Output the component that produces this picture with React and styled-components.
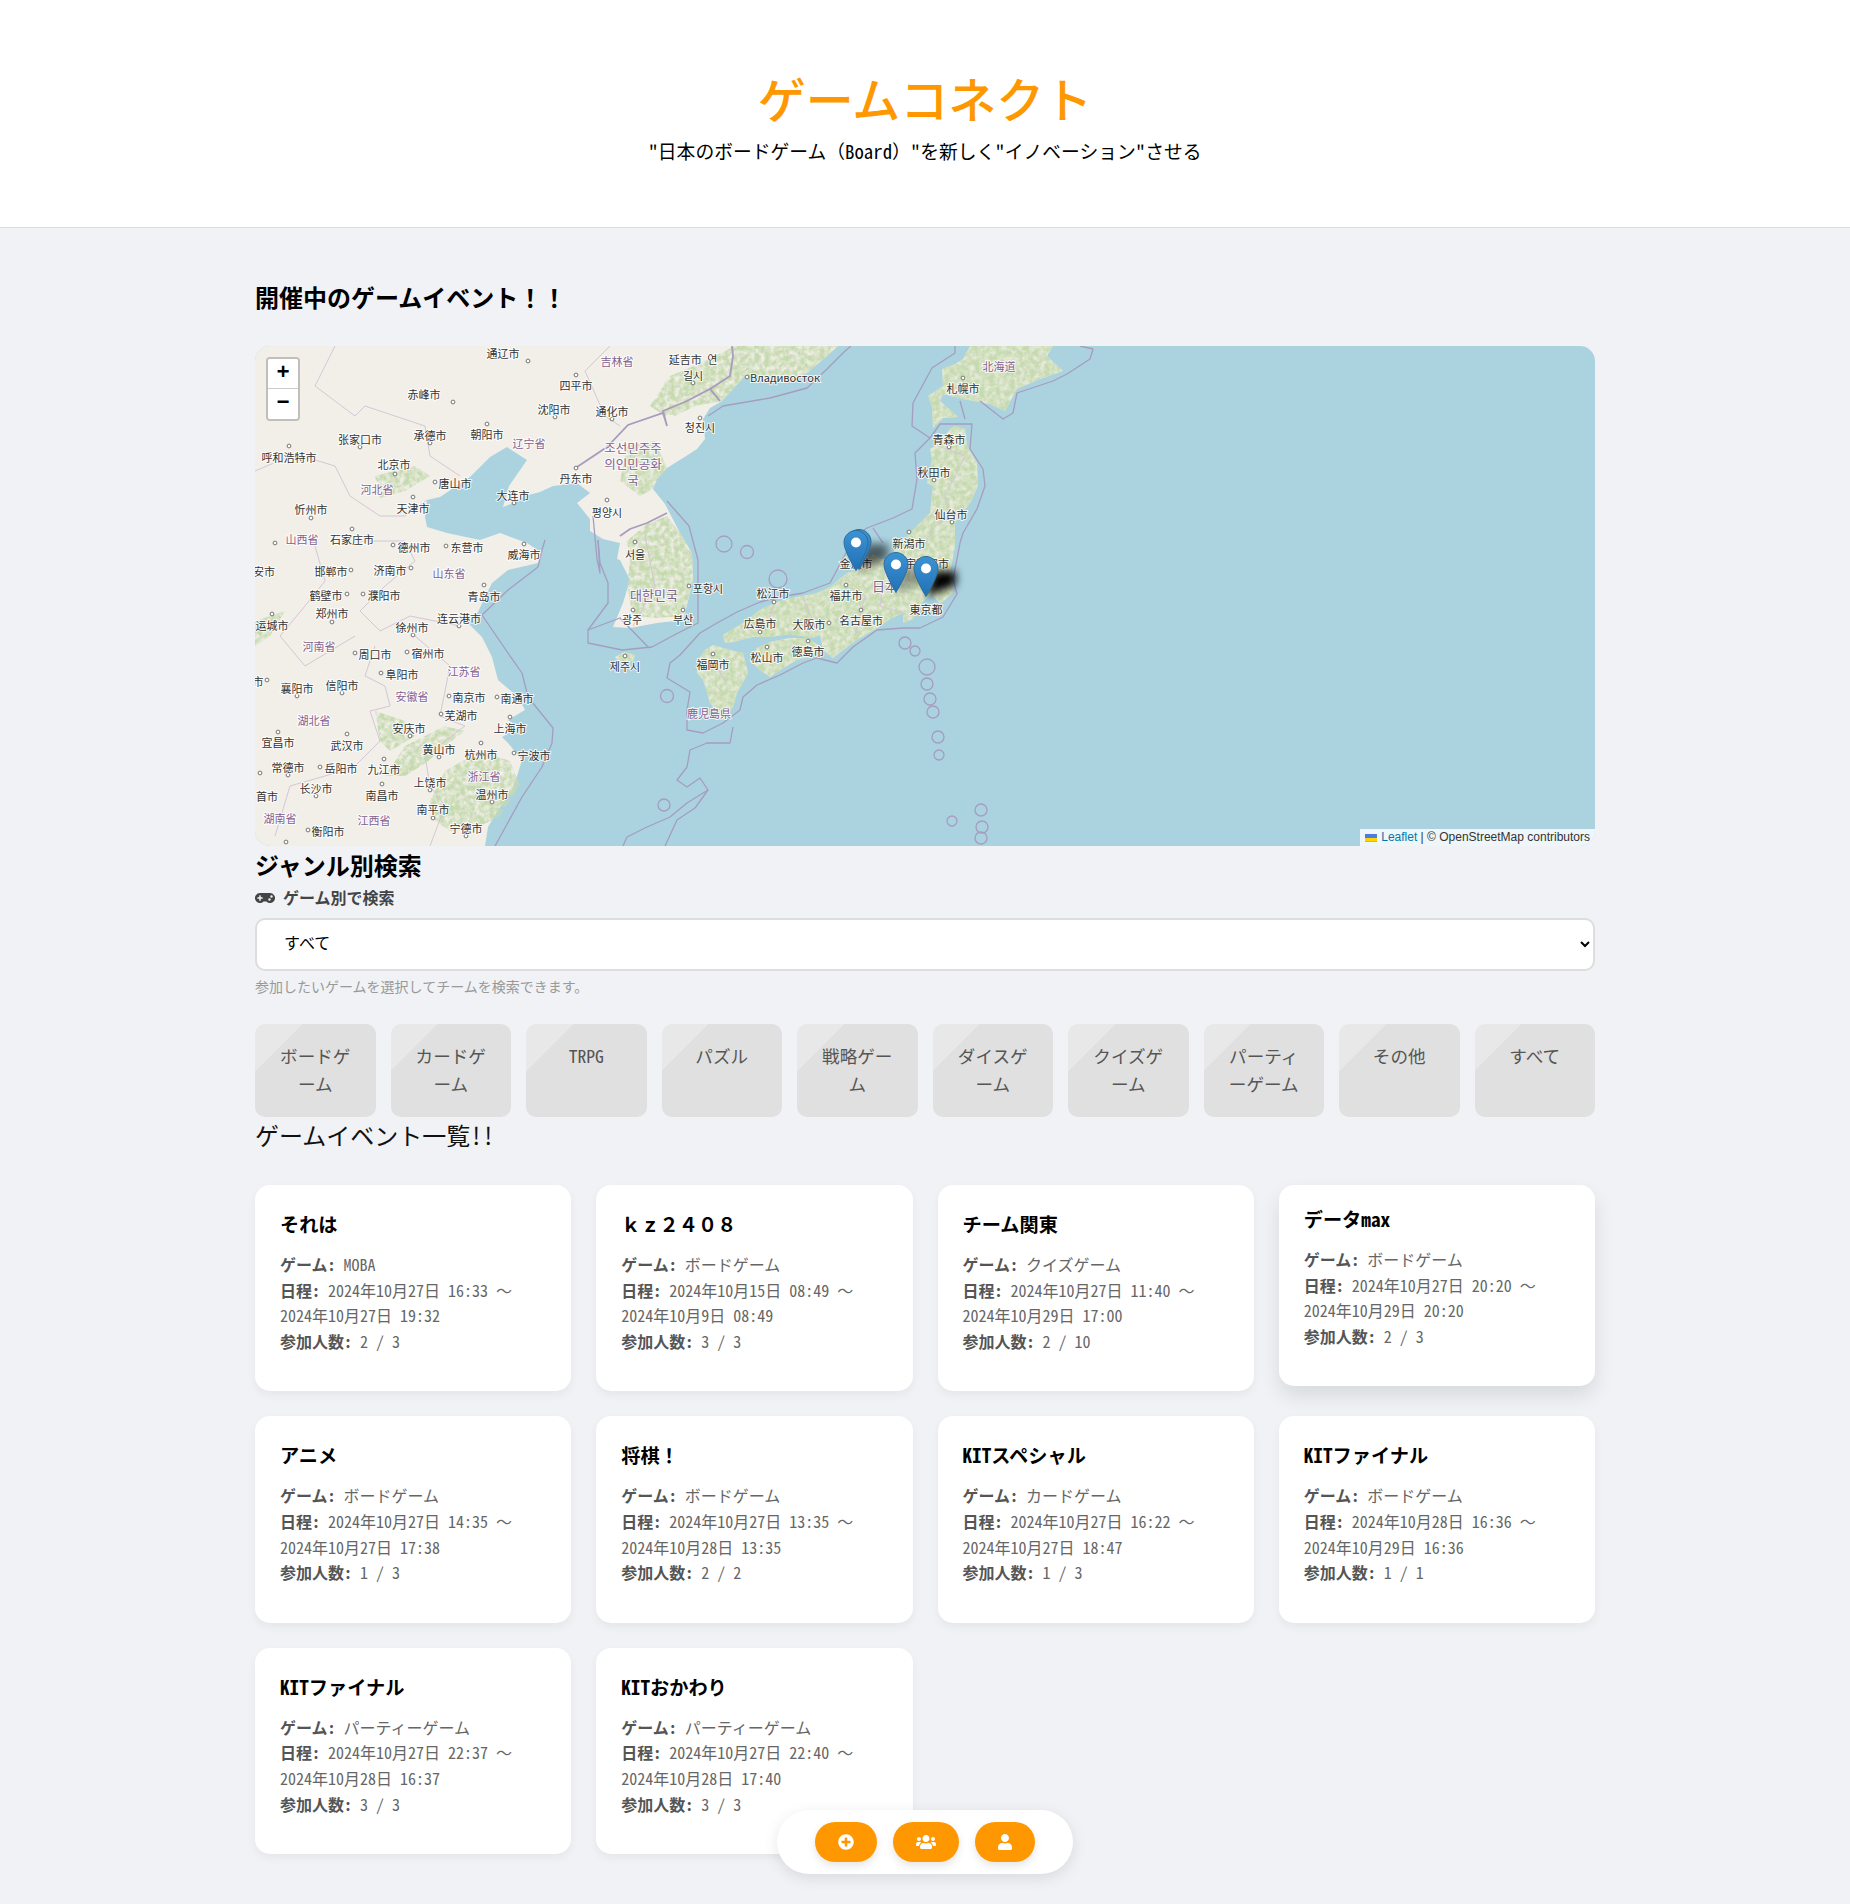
import React from "react";
import styled, { createGlobalStyle } from "styled-components";
import { FaGamepad, FaPlusCircle, FaUsers, FaUser } from "react-icons/fa";

const GlobalStyle = createGlobalStyle`
  * { box-sizing: border-box; }
  html, body { margin: 0; padding: 0; }
  body {
    background: #f0f2f5;
    color: #333;
    font-family: "Noto Sans CJK JP", "Noto Sans", sans-serif;
    font-feature-settings: "hwid";
    line-height: 1.6;
  }
`;

// hwid squeezes full-width punctuation too, this keeps it as typed
const FullWidth = styled.span`
  font-feature-settings: normal;
`;

const Header = styled.header`
  background: #fff;
  border-bottom: 1px solid #ddd;
  height: 228px;
  padding-top: 58px;
  text-align: center;
`;

const Title = styled.h1`
  margin: 0;
  color: #ff9800;
  font-size: 48px;
  font-weight: 500;
  line-height: 78px;
`;

const Subtitle = styled.p`
  margin: 0;
  color: #000;
  font-size: 18.8px;
  line-height: 30px;
`;

const Main = styled.main`
  width: 1340px;
  margin: 0 auto;
  padding: 50px 0 50px;
`;

const SectionTitle = styled.h2`
  margin: 0 0 ${(p) => p.$gap || 0}px;
  color: #000;
  font-size: 24px;
  font-weight: 700;
  line-height: 38.4px;
`;

const MapFrame = styled.div`
  position: relative;
  height: 500px;
  border-radius: 15px;
  overflow: hidden;
  background: #aad3df;
`;

const MapCanvas = styled.svg`
  display: block;
  font-family: "Noto Sans CJK SC", "Noto Sans CJK JP", sans-serif;
`;

const PlaceName = styled.text`
  fill: ${(p) => (p.$region ? "#82608f" : "#333")};
  font-size: ${(p) => p.$size || 11}px;
  text-anchor: middle;
  dominant-baseline: central;
  paint-order: stroke;
  stroke: rgba(255, 255, 255, 0.8);
  stroke-width: 2px;
`;

const Coast = styled.polygon`
  fill: ${(p) => p.$fill || "#f2efe9"};
  stroke: none;
`;

const SeaLine = styled.polyline`
  fill: none;
  stroke: #a59dbf;
  stroke-width: 1.3;
  stroke-linejoin: round;
`;

const AdminLine = styled.polyline`
  fill: none;
  stroke: ${(p) => (p.$strong ? "#a99bbd" : "#d3c6d6")};
  stroke-width: ${(p) => (p.$strong ? 1.8 : 1)};
`;

const SeaRing = styled.circle`
  fill: none;
  stroke: #a59dbf;
  stroke-width: 1.3;
`;

const CityDot = styled.circle`
  fill: #fff;
  stroke: #666;
  stroke-width: 0.9;
`;

const ZoomControl = styled.div`
  position: absolute;
  top: 11px;
  left: 11px;
  width: 34px;
  border: 2px solid rgba(0, 0, 0, 0.2);
  border-radius: 4px;
  background-clip: padding-box;
`;

const ZoomButton = styled.a`
  display: block;
  height: 30px;
  background: #fff;
  border-bottom: ${(p) => (p.$last ? "none" : "1px solid #ccc")};
  border-radius: ${(p) => (p.$last ? "0 0 2px 2px" : "2px 2px 0 0")};
  color: #000;
  font: bold 22px/30px "Liberation Mono", monospace;
  text-align: center;
`;

const Attribution = styled.div`
  position: absolute;
  right: 0;
  bottom: 0;
  display: flex;
  align-items: center;
  gap: 4px;
  padding: 0 5px;
  height: 17px;
  background: rgba(255, 255, 255, 0.8);
  color: #333;
  font: 12px/17px "Liberation Sans", Arial, sans-serif;
  white-space: pre;
`;

const AttributionLink = styled.a`
  color: #0078a8;
`;

const GenreSectionIcon = styled(FaGamepad)`
  width: 20px;
  height: 16px;
`;

const FilterLabel = styled.label`
  display: flex;
  align-items: center;
  gap: 8px;
  color: #444;
  font-size: 16px;
  font-weight: 700;
  line-height: 25.6px;
`;

const GameSelect = styled.select`
  display: block;
  width: 100%;
  height: 53px;
  margin-top: 8px;
  padding: 0 23px 5px;
  background: #fff;
  border: 2px solid #ddd;
  border-radius: 10px;
  color: #000;
  font-family: inherit;
  font-size: 16px;
`;

const Hint = styled.p`
  margin: 4px 0 26px;
  color: #999;
  font-size: 14px;
  line-height: 22.4px;
`;

const GenreGrid = styled.div`
  display: grid;
  grid-template-columns: repeat(10, 1fr);
  gap: 15px;
`;

const GenreButton = styled.button`
  display: flex;
  justify-content: center;
  align-items: flex-start;
  height: 93px;
  padding: 18px 20px;
  border: none;
  border-radius: 10px;
  background: linear-gradient(135deg, #e8e8e8 22%, #e0e0e0 22%);
  color: #555;
  font-family: inherit;
  font-feature-settings: inherit;
  font-size: 17.6px;
  line-height: 28.5px;
  text-align: center;
`;

const ListTitle = styled.h2`
  margin: 0 0 32px;
  color: #111;
  font-size: 24px;
  font-weight: 400;
  line-height: 36px;
`;

const CardGrid = styled.div`
  display: grid;
  grid-template-columns: repeat(4, 1fr);
  gap: 25px;
`;

const Card = styled.article`
  height: ${(p) => (p.$raised ? 201 : 206.4)}px;
  padding: ${(p) => (p.$raised ? 20 : 25)}px 25px 25px;
  background: #fff;
  border-radius: 15px;
  box-shadow: ${(p) =>
    p.$raised ? "0 10px 20px rgba(0, 0, 0, 0.1)" : "0 4px 10px rgba(0, 0, 0, 0.05)"};
`;

const CardTitle = styled.h3`
  margin: 0 0 12.5px;
  color: #000;
  font-size: 19.2px;
  font-weight: 700;
  line-height: 29.7px;
`;

const CardLine = styled.p`
  margin: 0;
  color: #666;
  font-size: 16px;
  line-height: 25.6px;
`;

const CardLabel = styled.strong`
  color: #555;
  font-weight: 700;
`;

const BottomNav = styled.nav`
  position: fixed;
  left: 50%;
  bottom: 30px;
  transform: translateX(-50%);
  display: flex;
  gap: 16px;
  padding: 12px 38px;
  background: #fff;
  border-radius: 32px;
  box-shadow: 0 4px 15px rgba(0, 0, 0, 0.1);
`;

const NavButton = styled.button`
  display: flex;
  align-items: center;
  height: 40px;
  padding: 12px 23px;
  border: none;
  border-radius: 20px;
  background: #ff9800;
  box-shadow: 0 4px 8px rgba(0, 0, 0, 0.1);
  color: #fff;
  font-size: 16px;
`;

const UsersIcon = styled(FaUsers)`
  width: 20px;
  height: 16px;
`;

const UserIcon = styled(FaUser)`
  width: 14px;
  height: 16px;
`;

const genres = ["ボードゲーム", "カードゲーム", "TRPG", "パズル", "戦略ゲーム", "ダイスゲーム", "クイズゲーム", "パーティーゲーム", "その他", "すべて"];

const events = [
  { name: "それは", game: "MOBA", from: "2024年10月27日 16:33", to: "2024年10月27日 19:32", count: "2 / 3" },
  { name: "ｋｚ２４０８", wide: true, game: "ボードゲーム", from: "2024年10月15日 08:49", to: "2024年10月9日 08:49", count: "3 / 3" },
  { name: "チーム関東", game: "クイズゲーム", from: "2024年10月27日 11:40", to: "2024年10月29日 17:00", count: "2 / 10" },
  { name: "データmax", game: "ボードゲーム", from: "2024年10月27日 20:20", to: "2024年10月29日 20:20", count: "2 / 3", raised: true },
  { name: "アニメ", game: "ボードゲーム", from: "2024年10月27日 14:35", to: "2024年10月27日 17:38", count: "1 / 3" },
  { name: "将棋！", wide: true, game: "ボードゲーム", from: "2024年10月27日 13:35", to: "2024年10月28日 13:35", count: "2 / 2" },
  { name: "KITスペシャル", game: "カードゲーム", from: "2024年10月27日 16:22", to: "2024年10月27日 18:47", count: "1 / 3" },
  { name: "KITファイナル", game: "ボードゲーム", from: "2024年10月28日 16:36", to: "2024年10月29日 16:36", count: "1 / 1" },
  { name: "KITファイナル", game: "パーティーゲーム", from: "2024年10月27日 22:37", to: "2024年10月28日 16:37", count: "3 / 3" },
  { name: "KITおかわり", game: "パーティーゲーム", from: "2024年10月27日 22:40", to: "2024年10月28日 17:40", count: "3 / 3" },
];

// map drawing, coordinates are pixels inside the 1340x500 map
const mainland = "583,0 572,10 552,27 532,37 512,35 498,27 488,32 478,43 467,55 455,62 448,73 450,93 442,103 428,112 412,122 402,133 398,143 410,158 425,187 437,207 438,233 435,247 428,274 402,277 375,282 358,281 368,257 375,234 365,214 362,213 365,197 348,193 335,185 335,173 322,157 335,147 322,137 298,140 285,146 270,150 258,157 248,161 254,140 272,114 252,101 235,111 215,131 185,151 172,154 170,171 172,181 192,187 225,194 245,187 272,197 287,207 283,217 253,224 237,237 230,251 223,266 213,277 227,291 237,311 243,334 263,351 270,364 253,374 263,381 247,391 253,397 267,414 263,427 257,444 243,464 233,481 230,500 0,500 0,0";
const hokkaido = "715,0 708,13 700,18 687,23 688,40 673,50 677,60 678,82 688,72 703,71 685,55 688,48 708,53 735,58 750,65 762,43 785,33 808,25 792,10 798,0";
const honshu = "700,80 710,83 712,100 722,117 723,140 715,157 700,177 700,200 695,227 698,247 685,258 677,248 670,253 663,263 658,273 648,277 648,267 635,273 622,282 602,294 588,304 578,312 568,304 565,289 558,292 535,288 515,291 498,291 478,296 470,297 468,289 488,277 505,264 522,256 542,251 562,247 575,241 592,227 602,224 612,218 618,208 625,213 632,213 655,187 675,167 678,140 672,137 677,113 675,103 685,97 695,83";
const shikoku = "502,302 515,296 535,292 552,292 568,302 555,311 542,314 525,324 515,331 505,324 495,314";
const kyushu = "458,299 475,304 488,307 493,327 482,347 478,361 468,374 463,367 455,357 452,346 448,334 442,327 443,314 450,304";
const jeju = "370,306 380,309 378,315 364,316 360,311";
const islands = [hokkaido, honshu, shikoku, kyushu, jeju];
const forests = [
  "480,0 583,0 572,10 552,27 532,37 512,35 498,27 488,32 478,43 467,55 440,60 410,70 395,60 415,30 450,15",
  "372,100 400,95 412,122 402,133 398,143 385,150 365,135",
  "412,170 425,187 437,207 438,233 435,247 428,270 402,272 378,270 372,240 375,215 372,195 392,178",
  "120,130 140,125 160,120 175,130 150,145 125,152",
  "130,430 150,400 190,380 210,385 190,400 172,416 150,430",
  "175,455 190,425 225,405 255,415 265,440 245,470 225,480 195,485 180,475",
  "120,365 150,375 160,390 135,405 125,395",
  "0,275 30,265 15,290 0,300",
  "410,35 435,30 440,60 420,70 405,65",
];
const seaLines = [
  "453,70 468,60 515,52 552,42 572,23 590,5 596,0",
  "700,0 700,7 677,22 658,57 657,80 675,92 660,107 662,133 657,163 638,172 612,182 600,190 575,237 548,247 525,251 505,256 482,266 462,277 445,287 425,309 415,317 412,332 435,346 432,364 432,384 448,387 468,377 485,364 488,351 502,339 525,329 548,317 562,312 582,317 598,301 622,284 648,282 665,282 688,271 702,248 698,233 702,213 705,197 708,187 722,163 730,140 728,123 715,103 717,78 685,78 675,92",
  "705,55 710,73",
  "725,55 748,73 758,67 762,47 798,35 812,28 835,13 838,3 825,0",
  "290,194 287,204 283,221 253,244 227,269 253,307 267,327 273,351 298,382 297,397 287,421 267,451 240,500",
  "343,194 345,217 353,237 353,257 333,284 333,297 367,304 397,301 423,287 443,277 443,214 434,180 412,155",
  "338,170 342,213 345,227 343,194",
  "478,381 475,397 452,397 435,404 432,421 422,434 432,441 445,432 453,444 432,457 415,471 392,481 372,491 368,500",
  "410,500 422,474 440,462 453,444",
  "618,182 628,197",
  "333,284 365,272 394,302",
];
const seaRings = [
  [469, 198, 8], [492, 206, 6.5], [523, 233, 9], [412, 350, 6.5], [409, 459, 6], [672, 321, 8], [672, 338, 6],
  [675, 353, 6], [678, 366, 6], [683, 391, 6], [684, 409, 5], [697, 475, 5], [726, 464, 6], [727, 481, 6], [726, 492, 6],
  [650, 297, 6], [660, 305, 5],
];
const adminLines = [
  "322,121 352,101 373,79 408,67 412,80 408,65 432,55 455,43 465,55",
  "455,43 475,30 478,10 477,0",
  "412,167 392,177 375,183 365,190",
];
const provinceLines = [
  "80,0 60,40 100,70 110,60 170,80 175,110 205,130",
  "0,125 40,108 80,120 95,150 125,170 150,170 172,154",
  "105,195 150,195 160,215 130,240 105,265 125,285 155,270 180,275 205,280",
  "60,200 70,235 50,260 25,290 50,320 100,290",
  "120,300 110,330 130,340 135,360 115,365 125,395 100,420 70,430 35,440 20,490",
  "160,290 195,320 190,345 185,370 210,380 170,410 175,440 190,460 175,500",
  "355,0 330,25 350,70 365,80",
  "590,230 610,250 600,290",
  "630,220 625,260 648,267",
  "660,215 680,235",
  "683,100 710,110 690,150 695,170 680,180 665,205",
  "520,255 510,285",
  "548,252 560,280",
  "455,310 470,335",
  "390,190 400,240 378,280",
];
const cityDots = [
  [321,29],[198,56],[300,71],[357,73],[105,101],[175,97],[232,78],[34,100],[140,128],[180,136],[158,151],[259,157],[352,154],[321,122],[445,72],[438,37],[273,15],[56,172],[97,183],[20,197],[138,199],[191,200],[269,198],[380,196],
  [96,224],[156,222],[92,248],[108,248],[229,239],[17,268],[77,276],[204,280],[158,289],[100,307],[152,306],[126,327],[12,334],[42,350],[87,347],[194,350],[242,351],[186,368],[255,371],[155,390],[23,386],[92,388],[184,411],[226,397],[259,407],[33,429],[65,421],[129,413],[175,444],[61,450],[127,438],[237,456],[178,472],[211,490],[53,484],[31,496],[5,427],
  [492,31],[434,240],[378,264],[428,264],[370,310],[519,256],[505,286],[574,277],[591,239],[606,264],[512,301],[553,295],[458,308],[654,186],[697,176],[679,134],[694,101],[708,32],
];
const cities = [
  ["通辽市",248,7],["延吉市 연",438,13],["길시",438,29],["四平市",321,39],["赤峰市",169,48],["沈阳市",299,63],["通化市",357,65],["张家口市",105,93],["承德市",175,89],["朝阳市",232,88],["청진시",445,81],["呼和浩特市",34,111],["北京市",139,118],["丹东市",321,132],["唐山市",200,137],["大连市",258,149],["평양시",352,166],["忻州市",56,163],["天津市",158,162],["石家庄市",97,193],["德州市",159,201],["东营市",212,201],["威海市",269,208],["서울",380,208],
  ["邯郸市",76,225],["济南市",135,224],["安市",9,225],["鹤壁市",71,249],["濮阳市",129,249],["青岛市",229,250],["郑州市",77,267],["连云港市",204,272],["运城市",17,279],["徐州市",157,281],["周口市",120,308],["宿州市",173,307],["阜阳市",147,328],["市",3,335],["襄阳市",42,342],["信阳市",87,339],["南京市",214,351],["南通市",262,352],["芜湖市",206,369],["安庆市",154,382],["上海市",255,382],["宜昌市",23,396],["武汉市",92,399],["黄山市",184,403],["杭州市",226,408],["宁波市",279,409],["常德市",33,421],["岳阳市",86,422],["九江市",129,423],["上饶市",175,436],["长沙市",61,442],["首市",12,450],["南昌市",127,449],["温州市",237,448],["南平市",178,463],["宁德市",211,482],["衡阳市",73,485],
  ["포항시",453,242],["광주",377,273],["부산",428,273],["제주시",370,320],["福岡市",458,318],["松江市",518,247],["広島市",505,277],["大阪市",554,278],["福井市",591,249],["名古屋市",606,274],["東京都",671,263],["松山市",512,311],["徳島市",553,305],["金沢市",601,217],["新潟市",654,197],["宇都宮市",672,217],["仙台市",696,168],["秋田市",679,126],["青森市",694,93],["札幌市",708,42],["Владивосток",530,31],
];
const regions = [
  ["吉林省",362,15],["辽宁省",274,97],["조선민주주",378,101,12.5],["의인민공화",378,117,12.5],["국",378,133,12.5],["河北省",122,143],["山西省",47,193],["山东省",194,227],["河南省",64,300],["江苏省",209,325],["安徽省",157,350],["湖北省",59,374],["浙江省",229,430],["湖南省",25,472],["江西省",119,474],["대한민국",399,248,13],["鹿児島県",454,367],["日本",630,239,13],["北海道",744,20],
];
// some pins sit on top of each other in the reference, so they are listed twice
const pins = [
  { x: 604, y: 224, shadow: 0.35 },
  { x: 601, y: 225, shadow: 0.35 },
  { x: 641, y: 247, shadow: 0.35 },
  { x: 671, y: 251, shadow: 1 },
];

const PIN_PATH = "M12.5 0.5C5.9 0.5 0.5 5.9 0.5 12.5C0.5 21 12.5 40.5 12.5 40.5C12.5 40.5 24.5 21 24.5 12.5C24.5 5.9 19.1 0.5 12.5 0.5Z";

const JapanMap = () => (
  <MapCanvas width="1340" height="500" viewBox="0 0 1340 500">
    <defs>
      <linearGradient id="pinFill" x1="0" y1="0" x2="0" y2="1">
        <stop offset="0" stopColor="#3b93d3" />
        <stop offset="1" stopColor="#2270b5" />
      </linearGradient>
      <filter id="pinShadow" x="-60%" y="-60%" width="220%" height="220%">
        <feGaussianBlur stdDeviation="4" />
      </filter>
      <filter id="mottle" x="0" y="0" width="100%" height="100%">
        <feTurbulence type="fractalNoise" baseFrequency="0.2" numOctaves="3" seed="4" />
        <feColorMatrix values="0 0 0 0 0  0 0 0 0 0  0 0 0 0 0  2.2 0 0 0 -0.45" />
        <feComposite in="SourceGraphic" operator="in" />
      </filter>
    </defs>
    <Coast points={mainland} />
    {islands.map((points) => (
      <Coast key={points} points={points} $fill="#e8ebdc" />
    ))}
    <g filter="url(#mottle)">
      {islands.map((points) => (
        <Coast key={points} points={points} $fill="#c6dab0" />
      ))}
      {forests.map((points) => (
        <Coast key={points} points={points} $fill="#c6dab0" />
      ))}
    </g>
    {provinceLines.map((points) => (
      <AdminLine key={points} points={points} />
    ))}
    {adminLines.map((points) => (
      <AdminLine key={points} points={points} $strong />
    ))}
    {seaLines.map((points) => (
      <SeaLine key={points} points={points} />
    ))}
    {seaRings.map(([cx, cy, r]) => (
      <SeaRing key={`${cx}-${cy}`} cx={cx} cy={cy} r={r} />
    ))}
    {cityDots.map(([cx, cy]) => (
      <CityDot key={`${cx}-${cy}`} cx={cx} cy={cy} r="1.9" />
    ))}
    {cities.map(([name, x, y]) => (
      <PlaceName key={name} x={x} y={y}>{name}</PlaceName>
    ))}
    {regions.map(([name, x, y, size]) => (
      <PlaceName key={name} x={x} y={y} $region $size={size}>{name}</PlaceName>
    ))}
    {pins.map((pin) => (
      <polygon
        key={`shadow-${pin.x}`}
        points={`${pin.x},${pin.y} ${pin.x + 8},${pin.y - 26} ${pin.x + 30},${pin.y - 26} ${pin.x + 30},${pin.y - 12}`}
        fill="#000"
        opacity={pin.shadow}
        filter="url(#pinShadow)"
      />
    ))}
    {pins.map((pin) => (
      <g key={`pin-${pin.x}`} transform={`translate(${pin.x - 12.5} ${pin.y - 41})`}>
        <path d={PIN_PATH} fill="url(#pinFill)" stroke="#2e6c97" />
        <circle cx="12.5" cy="12.5" r="5" fill="#fff" />
      </g>
    ))}
  </MapCanvas>
);

const App = () => (
  <>
    <GlobalStyle />
    <Header>
      <Title>ゲームコネクト</Title>
      <Subtitle>"日本のボードゲーム<FullWidth>（</FullWidth>Board<FullWidth>）</FullWidth>"を新しく"イノベーション"させる</Subtitle>
    </Header>
    <Main>
      <SectionTitle $gap={30}>開催中のゲームイベント<FullWidth>！！</FullWidth></SectionTitle>
      <MapFrame>
        <JapanMap />
        <ZoomControl>
          <ZoomButton>+</ZoomButton>
          <ZoomButton $last>−</ZoomButton>
        </ZoomControl>
        <Attribution>
          <svg width="12" height="8" viewBox="0 0 12 8">
            <path fill="#4c7be1" d="M0 0h12v4H0z" />
            <path fill="#ffd500" d="M0 4h12v3H0z" />
            <path fill="#e0bc00" d="M0 7h12v1H0z" />
          </svg>
          <span>
            <AttributionLink>Leaflet</AttributionLink> | © OpenStreetMap contributors
          </span>
        </Attribution>
      </MapFrame>
      <SectionTitle>ジャンル別検索</SectionTitle>
      <FilterLabel>
        <GenreSectionIcon />
        ゲーム別で検索
      </FilterLabel>
      <GameSelect defaultValue="すべて">
        <option>すべて</option>
      </GameSelect>
      <Hint>参加したいゲームを選択してチームを検索できます。</Hint>
      <GenreGrid>
        {genres.map((genre) => (
          <GenreButton key={genre}>{genre}</GenreButton>
        ))}
      </GenreGrid>
      <ListTitle>ゲームイベント一覧!!</ListTitle>
      <CardGrid>
        {events.map((event) => (
          <Card key={event.name + event.game} $raised={event.raised}>
            <CardTitle>{event.wide ? <FullWidth>{event.name}</FullWidth> : event.name}</CardTitle>
            <CardLine><CardLabel>ゲーム:</CardLabel> {event.game}</CardLine>
            <CardLine>
              <CardLabel>日程:</CardLabel> {event.from} <FullWidth>～</FullWidth>
              <br />
              {event.to}
            </CardLine>
            <CardLine><CardLabel>参加人数:</CardLabel> {event.count}</CardLine>
          </Card>
        ))}
      </CardGrid>
    </Main>
    <BottomNav>
      <NavButton><FaPlusCircle /></NavButton>
      <NavButton><UsersIcon /></NavButton>
      <NavButton><UserIcon /></NavButton>
    </BottomNav>
  </>
);

export default App;
